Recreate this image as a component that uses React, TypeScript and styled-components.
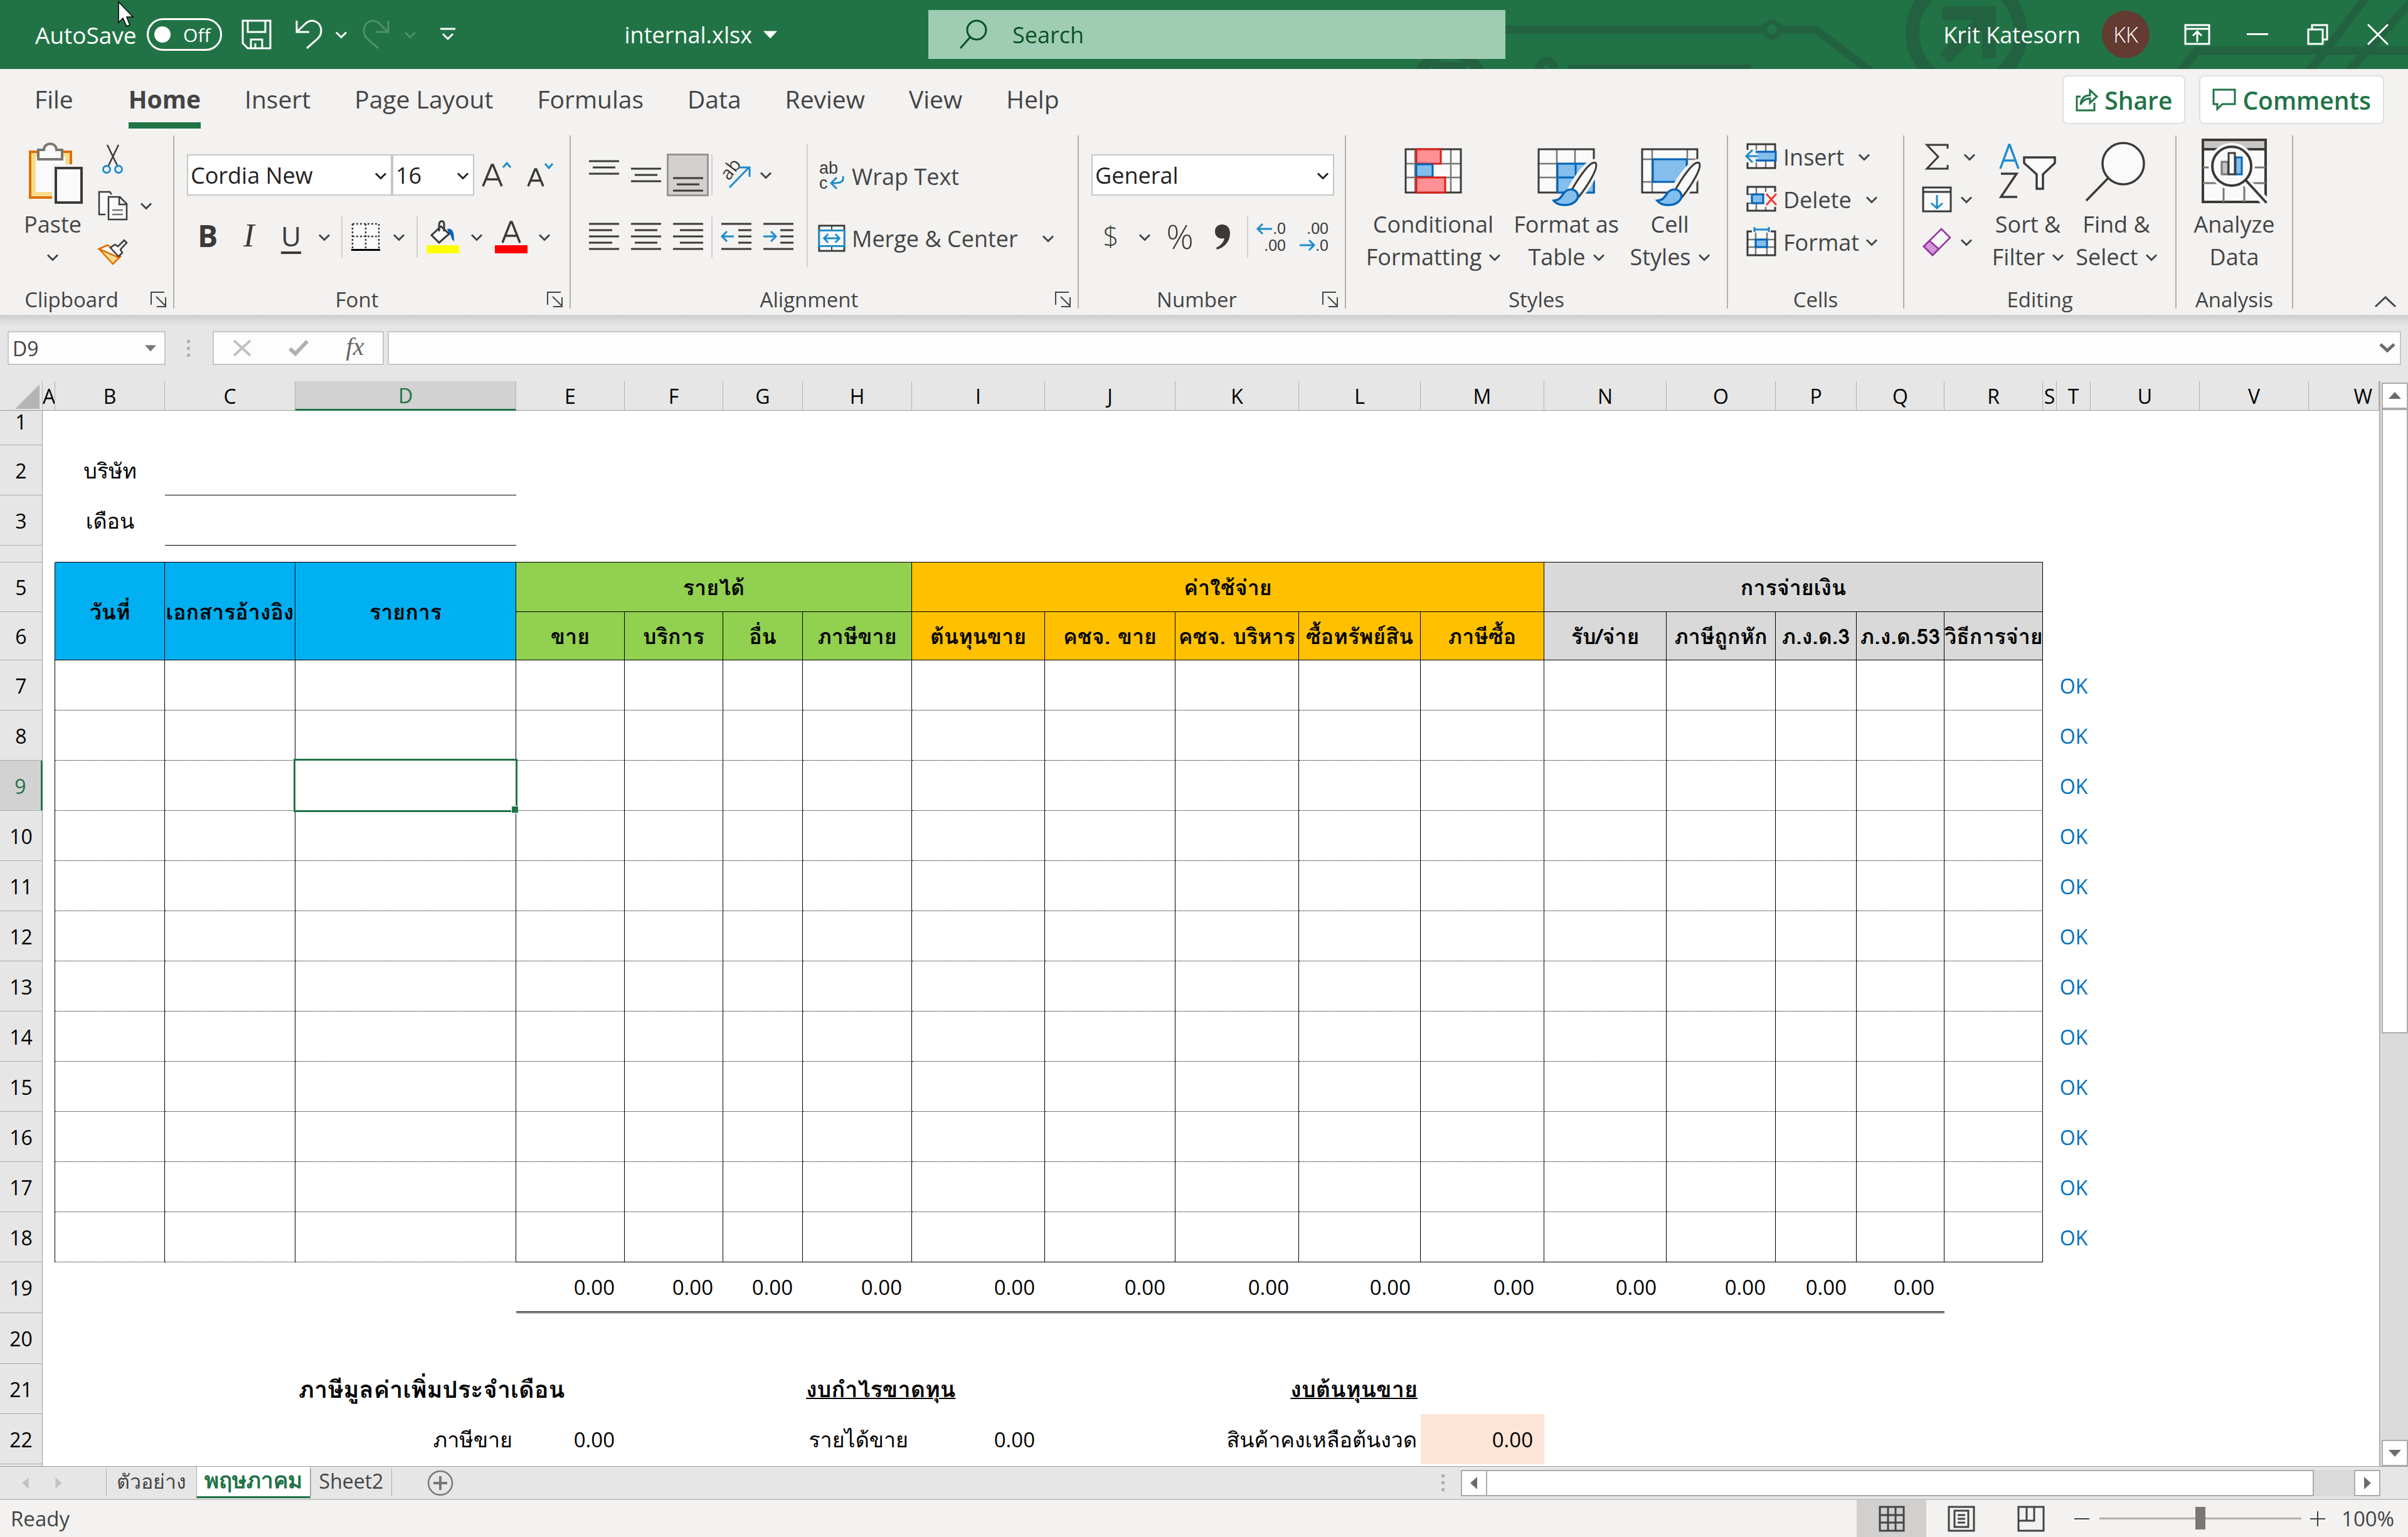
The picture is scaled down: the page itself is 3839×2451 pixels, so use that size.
import React from "react";
import styled, { createGlobalStyle, css } from "styled-components";

const UI_FONT = `"Open Sans", "Noto Sans", sans-serif`;
const THAI_FONT = `"Loma", "Waree", "Garuda", "Noto Sans Thai Looped", "Open Sans", "Noto Sans", sans-serif`;

const GlobalStyle = createGlobalStyle`
  * { box-sizing: border-box; }
  body { margin: 0; background: #e6e6e6; font-family: ${UI_FONT}; color: #444; }
  button, input, select { font: inherit; color: inherit; margin: 0; padding: 0; border: 0; background: none; border-radius: 0; }
  svg { display: block; flex: none; overflow: visible; }
`;

const ink = "#3b3a38";
const blue = "#1e8bcd";
const deepBlue = "#0364b8";
const paleBlue = "#83beec";
const green = "#217346";

const Page = styled.div`
  display: flex;
  flex-direction: column;
  height: 100vh;
  overflow: hidden;
`;

/* ---------- title bar ---------- */

const TitleBar = styled.header`
  position: relative;
  display: grid;
  grid-template-columns: 1480fr 920fr 1439fr;
  align-items: center;
  height: 110px;
  flex: none;
  background: ${green};
  color: #fff;
  font-size: 36px;
`;

const TitleArt = styled.svg`
  position: absolute;
  right: 0;
  top: 0;
  overflow: hidden;
`;

const TitleSide = styled.div<{ $end?: boolean }>`
  position: relative;
  display: flex;
  align-items: center;
  height: 100%;
  justify-content: ${(p) => (p.$end ? "flex-end" : "flex-start")};
  padding-left: ${(p) => (p.$end ? 0 : 56)}px;
`;

const AutoSave = styled.label`
  display: flex;
  align-items: center;
  gap: 16px;
  font-size: 37px;
`;

const Toggle = styled.span`
  position: relative;
  display: flex;
  align-items: center;
  justify-content: flex-end;
  width: 120px;
  height: 52px;
  padding-right: 15px;
  border: 3px solid #fff;
  border-radius: 26px;
  font-size: 30px;

  input {
    appearance: none;
    position: absolute;
    left: 9px;
    top: 10px;
    width: 26px;
    height: 26px;
    border-radius: 50%;
    background: #fff;
  }
`;

const Slot = styled.button<{ $w: number; $h?: number; $on?: boolean }>`
  display: flex;
  align-items: center;
  justify-content: center;
  flex: none;
  width: ${(p) => p.$w}px;
  height: ${(p) => p.$h ?? 68}px;
  ${(p) => p.$on && css`background: #d2d0ce; border: 3px solid #979593;`}
`;

const FileName = styled.button`
  display: flex;
  align-items: center;
  gap: 18px;
  margin-left: auto;
  margin-right: 241px;
`;

const SearchBox = styled.label`
  position: relative;
  display: flex;
  align-items: center;
  gap: 40px;
  height: 78px;
  padding-left: 50px;
  background: #9fcdb3;
  color: #0b5226;

  input {
    flex: 1;
    outline: none;
  }
  input::placeholder { color: #0b5226; opacity: 1; }
`;

const UserName = styled.span`
  margin-right: 34px;
`;

const Avatar = styled.span`
  display: flex;
  align-items: center;
  justify-content: center;
  width: 76px;
  height: 76px;
  margin-right: 28px;
  border-radius: 50%;
  background: #633b31;
  font-size: 34px;
  font-weight: 300;
`;

const MousePointer = styled.svg`
  position: absolute;
  left: 188px;
  top: 2px;
`;

/* ---------- tab strip ---------- */

const TabStrip = styled.nav`
  display: flex;
  align-items: center;
  height: 106px;
  flex: none;
  padding: 0 38px 0 55px;
  background: #f3f2f1;
  font-size: 39px;
`;

const TabList = styled.div`
  display: flex;
  gap: 70px;
  margin-right: auto;
`;

const Tab = styled.button<{ $active?: boolean }>`
  height: 84px;
  border-bottom: 10px solid ${(p) => (p.$active ? green : "transparent")};
  font-weight: ${(p) => (p.$active ? 700 : 400)};
  line-height: 74px;
  margin-left: ${(p) => (p.$active ? 18 : 0)}px;
`;

const PillButton = styled.button`
  display: flex;
  align-items: center;
  gap: 10px;
  height: 78px;
  margin: -8px 0 0 22px;
  padding: 0 19px;
  border: 2px solid #e1dfdd;
  border-radius: 8px;
  background: #fff;
  color: ${green};
  font-size: 39px;
  font-weight: 600;
`;

/* ---------- ribbon ---------- */

const Ribbon = styled.div`
  display: flex;
  height: 286px;
  flex: none;
  padding-bottom: 10px;
  background: #f3f2f1;
  font-size: 36px;
`;

const Group = styled.section<{ $w: number }>`
  display: flex;
  flex-direction: column;
  flex: none;
  width: ${(p) => p.$w}px;
  border-right: 2px solid #b3b0ad;
`;

const GroupBody = styled.div<{ $pad?: number }>`
  display: flex;
  height: 248px;
  padding-left: ${(p) => p.$pad ?? 0}px;
`;

const GroupFoot = styled.div`
  display: flex;
  align-items: center;
  height: 28px;
  font-size: 33px;
  line-height: 28px;

  span { flex: 1; text-align: center; }
`;

const LauncherButton = styled.button`
  width: 28px;
  margin: 0 8px 0 12px;
`;

const Collapse = styled.button`
  display: flex;
  align-items: flex-end;
  margin-left: auto;
  padding: 0 19px 2px 0;
`;

const Big = styled.button<{ $w: number }>`
  display: flex;
  flex-direction: column;
  align-items: center;
  flex: none;
  width: ${(p) => p.$w}px;
  height: 232px;
  line-height: 52px;
  white-space: nowrap;
`;

const BigIcon = styled.svg`
  width: 110px;
  height: 116px;
`;

const Line = styled.span`
  display: flex;
  align-items: center;
  justify-content: center;
  gap: 12px;
  height: 52px;
`;

const Stack = styled.div<{ $pad?: number; $gap?: number }>`
  display: flex;
  flex-direction: column;
  padding-top: ${(p) => p.$pad ?? 0}px;
  gap: ${(p) => p.$gap ?? 0}px;
`;

const ToolRow = styled.div`
  display: flex;
  align-items: center;
  height: 68px;
`;

const Rule = styled.i<{ $gap: number; $h?: number }>`
  width: 2px;
  height: ${(p) => p.$h ?? 66}px;
  margin: 0 ${(p) => p.$gap}px;
  background: #d2d0ce;
`;

const Combo = styled.label<{ $w: number }>`
  position: relative;
  display: block;
  width: ${(p) => p.$w}px;
  height: 66px;

  select {
    appearance: none;
    width: 100%;
    height: 100%;
    padding-left: 4px;
    border: 2px solid #c8c6c4;
    background: #fff;
    color: #222;
    font-size: 36px;
  }
  svg {
    position: absolute;
    right: 9px;
    top: 29px;
  }
`;

const TextTool = styled.button`
  display: flex;
  align-items: center;
  height: 68px;
  padding-left: 4px;
  gap: 10px;
  white-space: nowrap;
`;

const Glyph = styled.span<{ $size?: number; $weight?: number; $italic?: boolean; $under?: boolean; $serif?: boolean; $color?: string }>`
  padding-bottom: 4px;
  font-size: ${(p) => p.$size ?? 46}px;
  line-height: 52px;
  color: ${(p) => p.$color ?? ink};
  font-weight: ${(p) => p.$weight ?? 400};
  font-style: ${(p) => (p.$italic ? "italic" : "normal")};
  font-family: ${(p) => (p.$serif ? `"Liberation Serif", serif` : "inherit")};
  text-decoration: ${(p) => (p.$under ? "underline" : "none")};
  text-underline-offset: 8px;
`;

/* ---------- formula bar ---------- */

const FormulaBar = styled.div`
  display: flex;
  align-items: center;
  height: 106px;
  flex: none;
  padding: 0 11px 0 12px;
  background: linear-gradient(#cfcfcf, #e6e6e6 18px);
  font-size: 32px;
`;

const Field = styled.div<{ $w?: number }>`
  display: flex;
  align-items: center;
  height: 54px;
  width: ${(p) => (p.$w ? `${p.$w}px` : "auto")};
  flex: ${(p) => (p.$w ? "none" : "1")};
  border: 2px solid #c6c6c6;
  background: #fdfdfd;

  input { flex: 1; min-width: 0; padding-left: 6px; outline: none; }
`;

const Dots = styled.span<{ $before: number; $after: number }>`
  display: grid;
  gap: 6px;
  margin-left: ${(p) => (p.$before ? `${p.$before}px` : "auto")};
  margin-right: ${(p) => p.$after}px;

  i { width: 5px; height: 5px; background: #b0b0b0; }
`;

/* ---------- sheet ---------- */

const Workspace = styled.main`
  display: flex;
  flex: 1;
  min-height: 0;
`;

const SheetView = styled.div`
  flex: 1;
  min-width: 0;
  overflow: hidden;
  background: #fff;
  border-right: 2px solid #ababab;
`;

const Sheet = styled.table`
  width: 100%;
  table-layout: fixed;
  border-collapse: separate;
  border-spacing: 0;
  font-size: 32px;
  line-height: 40px;
  color: #000;
`;

const ColHead = styled.th<{ $active?: boolean; $end?: boolean }>`
  height: 47px;
  padding: ${(p) => (p.$end ? "2px 10px 0 0" : "2px 0 0")};
  overflow: hidden;
  text-align: ${(p) => (p.$end ? "right" : "center")};
  font-weight: 400;
  background: ${(p) => (p.$active ? "#d2d2d2" : "#e6e6e6")};
  color: ${(p) => (p.$active ? green : "#000")};
  border-right: 1px solid #b1b1b1;
  border-bottom: ${(p) => (p.$active ? `3px solid ${green}` : "1px solid #9b9b9b")};
`;

const RowHead = styled.th<{ $active?: boolean; $top?: boolean }>`
  padding: ${(p) => (p.$top ? 0 : 2)}px 0 0;
  text-align: center;
  vertical-align: ${(p) => (p.$top ? "top" : "middle")};
  line-height: ${(p) => (p.$top ? 36 : 40)}px;
  font-weight: 400;
  background: ${(p) => (p.$active ? "#d2d2d2" : "#e6e6e6")};
  color: ${(p) => (p.$active ? green : "#000")};
  border-right: ${(p) => (p.$active ? `3px solid ${green}` : "1px solid #9b9b9b")};
  border-bottom: 1px solid #ababab;
`;

const Row = styled.tr<{ $h: number }>`
  height: ${(p) => p.$h}px;
`;

type CellProps = {
  $bg?: string;
  $right?: boolean;
  $bottom?: "solid" | "dotted" | "double";
  $align?: "left" | "center" | "right";
  $pad?: number;
  $color?: string;
  $selected?: boolean;
};

const Cell = styled.td<CellProps>`
  ${(p) => p.$selected && css`position: relative;`}
  padding: 2px ${(p) => p.$pad ?? 0}px 0;
  white-space: nowrap;
  text-align: ${(p) => p.$align ?? "center"};
  color: ${(p) => p.$color ?? "#000"};
  background: ${(p) => p.$bg ?? "#fff"};
  border-right: ${(p) => (p.$right ? "1px solid #000" : "0")};
  border-bottom: ${(p) =>
    p.$bottom === "double" ? "3px double #000" : p.$bottom ? `1px ${p.$bottom} #000` : "0"};
`;

const Thai = styled.span<{ $kind?: "head" | "title" | "under" }>`
  font-family: ${THAI_FONT};
  font-size: ${(p) => (p.$kind === "title" ? 38 : p.$kind === "under" ? 36 : 34)}px;
  font-weight: ${(p) => (p.$kind ? 600 : 300)};
  line-height: 40px;
  text-decoration: ${(p) => (p.$kind === "under" ? "underline" : "none")};
  text-decoration-thickness: 2px;
`;

const Figure = styled.span`
  font-size: 33px;
`;

const Selection = styled.i`
  position: absolute;
  inset: -3px;
  border: 3px solid ${green};

  &::after {
    content: "";
    position: absolute;
    right: -5px;
    bottom: -5px;
    width: 10px;
    height: 10px;
    background: ${green};
    border: 1px solid #fff;
  }
`;

/* ---------- scroll bars ---------- */

const VScroll = styled.div`
  display: flex;
  flex-direction: column;
  width: 42px;
  margin: 2px 0 0 2px;
  background: #dadada;
`;

const VThumb = styled.div`
  flex: 996;
  border: 2px solid #ababab;
  background: #fff;
`;

const VTrack = styled.div`
  flex: 651;
`;

const Arrow = styled.button`
  display: flex;
  align-items: center;
  justify-content: center;
  flex: none;
  width: 42px;
  height: 42px;
  border: 2px solid #ababab;
  background: #fff;
`;

/* ---------- bottom bars ---------- */

const SheetBar = styled.div`
  display: flex;
  align-items: center;
  height: 54px;
  flex: none;
  padding-right: 44px;
  border-top: 1px solid #9b9b9b;
  border-bottom: 2px solid #c6c6c6;
  background: #e6e6e6;
  font-size: 32px;
`;

const SheetNav = styled.div`
  display: flex;
  gap: 34px;
  width: 169px;
  padding-left: 32px;
`;

const SheetTab = styled.button<{ $active?: boolean; $w: number }>`
  width: ${(p) => p.$w}px;
  height: ${(p) => (p.$active ? 50 : 44)}px;
  margin-top: -2px;
  padding-bottom: 4px;
  line-height: 36px;
  font-size: ${(p) => (p.$active ? 35 : 32)}px;
  white-space: nowrap;
  border-left: 1px solid #ababab;
  border-right: 1px solid #ababab;
  ${(p) =>
    p.$active
      ? css`background: #fff; color: ${green}; font-weight: 700; border-bottom: 3px solid ${green};`
      : css`margin-right: -1px;`}
`;

const AddSheet = styled.button`
  margin-left: 57px;
`;

const HScroll = styled.div`
  display: flex;
  width: 1466px;
  background: #dadada;
`;

const HThumb = styled.div`
  flex: 1320;
  height: 42px;
  margin-left: -2px;
  border: 2px solid #ababab;
  background: #fff;
`;

const HTrack = styled.div`
  flex: 64;
`;

const StatusBar = styled.footer`
  display: flex;
  align-items: center;
  height: 59px;
  flex: none;
  padding: 0 22px 0 17px;
  background: #f3f2f1;
  font-size: 33px;
`;

const ReadyText = styled.span`
  margin-right: auto;
`;

const Views = styled.div`
  display: flex;
  margin-right: 12px;
`;

const ViewButton = styled.button<{ $active?: boolean }>`
  display: flex;
  align-items: center;
  justify-content: center;
  width: 111px;
  height: 59px;
  background: ${(p) => (p.$active ? "#d2d0ce" : "none")};
`;

const Zoom = styled.input`
  appearance: none;
  width: 322px;
  height: 40px;
  margin: 0 14px;

  &::-webkit-slider-runnable-track {
    height: 3px;
    background: #b3b0ad;
  }
  &::-webkit-slider-thumb {
    appearance: none;
    width: 16px;
    height: 36px;
    margin-top: -17px;
    background: #7a7875;
  }
`;

const ZoomValue = styled.output`
  width: 88px;
  margin-left: 22px;
  text-align: right;
`;

/* ---------- icons ---------- */

const Chevron = ({ color = "#444" }: { color?: string }) => (
  <svg width="18" height="11" viewBox="0 0 18 11" fill="none" stroke={color} strokeWidth="3">
    <path d="M1 1.5 9 9.5 17 1.5" />
  </svg>
);

const Triangle = ({ d, color = "#6b6b6b", size = 20 }: { d: "up" | "down" | "left" | "right"; color?: string; size?: number }) => {
  const shapes = {
    up: "M0 15 10 4 20 15Z",
    down: "M0 5 10 16 20 5Z",
    left: "M15 0 4 10 15 20Z",
    right: "M5 0 16 10 5 20Z",
  };
  return (
    <svg width={size} height={size} viewBox="0 0 20 20" fill={color}>
      <path d={shapes[d]} />
    </svg>
  );
};

const Launcher = () => (
  <svg width="26" height="26" viewBox="0 0 26 26" fill="none" stroke="#444" strokeWidth="2">
    <path d="M1 21V1H22M9 8 23 22M24 9V24H10" />
  </svg>
);

const Lines = ({ rows, top = 0, h = 48 }: { rows: [number, number][]; top?: number; h?: number }) => (
  <svg width="48" height={h} viewBox={`0 0 48 ${h}`} stroke={ink} strokeWidth="3">
    {rows.map(([a, b], i) => (
      <path key={i} d={`M${a} ${top + i * 10}H${b}`} />
    ))}
  </svg>
);

const Art = () => (
  <TitleArt width="1600" height="110" viewBox="2239 0 1600 110" fill="none" stroke="#226240" strokeWidth="13">
    <path d="M2400 47H2810M2840 47H2895L2985 116M2500 109H2792" />
    <circle cx="2825" cy="47" r="12" strokeWidth="8" />
    <circle cx="3135" cy="52" r="86" strokeWidth="22" />
    <path d="M3097 10H3182V93H3160V48L3108 101 3092 86 3146 32H3097Z" fill="#226240" stroke="none" />
    <path d="M3476 116 3502 81H3839M3772 -4 3680 116M3850 -4 3742 116" />
    <circle cx="2312" cy="134" r="50" strokeWidth="18" />
    <path d="M2283 99H2338V112H2283Z" fill="#226240" stroke="none" />
    <path d="M2453 114C2453 92 2475 92 2478 108" />
  </TitleArt>
);

const TableBase = ({ x, y, w, h, cols, rows }: { x: number; y: number; w: number; h: number; cols: number[]; rows: number[] }) => (
  <g fill="none">
    <rect x={x} y={y} width={w} height={h} fill="#fafafa" />
    <path d={cols.map((c) => `M${c} ${y}V${y + h}`).join("") + rows.map((r) => `M${x} ${r}H${x + w}`).join("")} stroke="#797774" strokeWidth="2.500" />
    <rect x={x} y={y} width={w} height={h} stroke={ink} strokeWidth="3" />
  </g>
);

const Brush = ({ x, y }: { x: number; y: number }) => (
  <g transform={`translate(${x} ${y})`}>
    <path d="M17 46C30 18 52-8 60-2 65 6 46 34 32 52Z" fill="#fafafa" stroke="#f3f2f1" strokeWidth="11" />
    <path d="M18 46C32 20 52-8 59-2 64 6 46 34 32 52Z" fill="#fafafa" stroke={ink} strokeWidth="3" />
    <path d="M-8 58C4 57 5 49 9 45 14 39 24 38 29 45 35 55 24 65 10 65 2 65-5 62-8 58Z" fill={paleBlue} stroke={deepBlue} strokeWidth="3.500" />
  </g>
);

const PasteIcon = () => (
  <BigIcon viewBox="0 0 110 116" fill="none">
    <rect x="19" y="26" width="65" height="73" fill="#f9dc8e" stroke="#e07000" strokeWidth="4" />
    <rect x="28" y="34" width="47" height="56" fill="#fafafa" />
    <path d="M32 29V38H70V23H61C61 10 41 10 41 23H32Z" fill="#fafafa" stroke="#797774" strokeWidth="4" />
    <rect x="54" y="46" width="52" height="68" fill="#f3f2f1" />
    <rect x="60" y="52" width="41" height="55" fill="#fafafa" stroke={ink} strokeWidth="4" />
  </BigIcon>
);

const CutIcon = () => (
  <svg width="34" height="48" viewBox="0 0 34 48" fill="none" strokeWidth="3">
    <path d="M8 1 24 34M26 1 10 34" stroke={ink} strokeWidth="2.500" />
    <circle cx="7" cy="40" r="5.500" stroke={blue} />
    <circle cx="26" cy="40" r="5.500" stroke={blue} />
  </svg>
);

const CopyIcon = () => (
  <svg width="48" height="48" viewBox="0 0 48 48" fill="#fafafa" stroke={ink} strokeWidth="2.500">
    <path d="M12 38H2V2H19L22 6" />
    <path d="M17 10H35L46 21V46H17ZM34 10V22H46" />
    <path d="M23 31H40M23 38H40" stroke="#797774" />
  </svg>
);

const PainterIcon = () => (
  <svg width="48" height="42" viewBox="0 0 48 42" fill="none" strokeWidth="2.500">
    <path d="M2 16 15 10 36 28 24 40Z" fill="#f9dc8e" stroke="#e07000" />
    <path d="M2 16 34 30 36 28 22 14 15 10Z" fill="#fafafa" stroke="#e07000" />
    <path d="M20 14 27 9 32 12 42 2 46 6 36 17 39 22 33 28Z" fill="#fafafa" stroke={ink} />
  </svg>
);

const BordersIcon = () => (
  <svg width="46" height="46" viewBox="0 0 46 46" fill="none" stroke={ink} strokeWidth="2.500">
    <rect x="1" y="1" width="44" height="42" fill="#fafafa" stroke="none" />
    <path d="M2 2H44M2 22H44M2 2V42M23 2V42M44 2V42" strokeDasharray="3 3" />
    <path d="M0 43.500H46" stroke="#000" strokeWidth="3" />
  </svg>
);

const FillIcon = () => (
  <svg width="52" height="54" viewBox="0 0 52 54" fill="none">
    <path d="M8 24 23 10 36 22 20 36Z" fill="#fafafa" stroke={ink} strokeWidth="3" />
    <path d="M20 18V8C20 0 28 0 28 6V18" stroke={ink} strokeWidth="3" />
    <path d="M33 14C42 12 44 20 44 34 38 30 40 22 35 20Z" fill={deepBlue} />
    <path d="M0 40H52V53H0Z" fill="#ff0" />
  </svg>
);

const FontColorIcon = () => (
  <svg width="52" height="54" viewBox="0 0 52 54" fill="none">
    <path d="M12 36 25 3H27L40 36M17 25H35" stroke={ink} strokeWidth="3.500" />
    <path d="M0 40H52V53H0Z" fill="#f00" />
  </svg>
);

const GrowIcon = ({ up }: { up?: boolean }) => (
  <svg width="48" height="52" viewBox="0 0 48 52" fill="none" strokeWidth="3">
    <path d={up ? "M2 44 16 10H18L32 44M7 33H27" : "M2 44 13 17H15L26 44M6 35H22"} stroke={ink} strokeWidth="3.500" />
    <path d={up ? "M34 14 40 7 46 14" : "M29 8 35 15 41 8"} stroke={blue} />
  </svg>
);

const OrientIcon = () => (
  <svg width="50" height="52" viewBox="0 0 50 52" fill="none">
    <text x="0" y="0" transform="translate(14 36) rotate(-52)" fontSize="29" fill={ink}>ab</text>
    <path d="M15 46 46 14M30 14H47V29" stroke={blue} strokeWidth="3" />
  </svg>
);

const IndentIcon = ({ out }: { out?: boolean }) => (
  <svg width="48" height="48" viewBox="0 0 48 48" fill="none" strokeWidth="3">
    <path d="M0 3H48M27 13H48M27 23H48M27 33H48M0 43H48" stroke={ink} />
    <path d={out ? "M20 23H2M9 15 1 23 9 31" : "M0 23H19M12 15 20 23 12 31"} stroke={blue} />
  </svg>
);

const SmallText = styled.text`
  font-family: "Liberation Sans", sans-serif;
  fill: ${ink};
`;

const WrapIcon = () => (
  <svg width="44" height="54" viewBox="0 0 44 54" fill="none">
    <SmallText x="2" y="23" fontSize="27">ab</SmallText>
    <SmallText x="2" y="47" fontSize="27">c</SmallText>
    <path d="M40 27C42 38 34 38 21 38M30 29 21 38 30 47" stroke={blue} strokeWidth="3" />
  </svg>
);

const MergeIcon = () => (
  <svg width="44" height="46" viewBox="0 0 46 46" fill="none">
    <rect x="2" y="2" width="42" height="42" fill="#fafafa" stroke={ink} strokeWidth="3" />
    <path d="M23 2V10M23 36V44" stroke={ink} strokeWidth="2" />
    <rect x="2" y="10" width="42" height="26" fill="#fafafa" stroke={blue} strokeWidth="3" />
    <path d="M10 23H36M17 16 10 23 17 30M29 16 36 23 29 30" stroke={blue} strokeWidth="3" />
  </svg>
);

const DecimalIcon = ({ more }: { more?: boolean }) => (
  <svg width="46" height="56" viewBox="0 0 46 56" fill="none">
    <SmallText x="46" y="23" textAnchor="end" fontSize="25">{more ? ".0" : ".00"}</SmallText>
    <SmallText x="46" y="50" textAnchor="end" fontSize="25">{more ? ".00" : ".0"}</SmallText>
    <path d={more ? "M24 15H2M9 7 1 15 9 23" : "M0 41H22M15 33 23 41 15 49"} stroke={blue} strokeWidth="3" />
  </svg>
);

const CommaIcon = () => (
  <svg width="26" height="42" viewBox="0 0 26 42" fill={ink}>
    <path d="M12 1C20 1 25 6 25 15 25 28 16 38 4 41L3 38C10 35 15 29 16 23 7 25 1 20 1 12 1 5 6 1 12 1Z" />
  </svg>
);

const ConditionalIcon = () => (
  <BigIcon viewBox="0 0 110 116" fill="none" strokeWidth="3">
    <TableBase x={11} y={22} w={88} h={69} cols={[26, 83]} rows={[45, 67]} />
    <rect x="28" y="22" width="39" height="23" fill="#ff9096" stroke="#d92118" />
    <rect x="28" y="46" width="26" height="20" fill={paleBlue} stroke={deepBlue} />
    <rect x="28" y="67" width="46" height="24" fill="#ff9096" stroke="#d92118" />
  </BigIcon>
);

const FormatTableIcon = () => (
  <BigIcon viewBox="0 0 110 116" fill="none" strokeWidth="3">
    <TableBase x={11} y={22} w={88} h={69} cols={[40, 69]} rows={[45, 67]} />
    <rect x="41" y="45" width="58" height="46" fill={paleBlue} stroke={deepBlue} />
    <path d="M41 67H99M70 45V91" stroke={deepBlue} />
    <Brush x={43} y={46} />
  </BigIcon>
);

const CellStylesIcon = () => (
  <BigIcon viewBox="0 0 110 116" fill="none" strokeWidth="3">
    <TableBase x={11} y={22} w={88} h={69} cols={[27, 83]} rows={[38, 74]} />
    <rect x="28" y="38" width="54" height="36" fill={paleBlue} stroke={deepBlue} />
    <Brush x={43} y={46} />
  </BigIcon>
);

const InsertIcon = () => (
  <svg width="50" height="44" viewBox="0 0 50 44" fill="none" strokeWidth="3">
    <TableBase x={3} y={2} w={44} h={38} cols={[17, 32]} rows={[14, 28]} />
    <path d="M0 11H24V31H0Z" fill="#f3f2f1" />
    <path d="M16 14H48V28H16" fill={paleBlue} stroke={deepBlue} />
    <path d="M20 21H2M11 11 1 21 11 31" stroke="#f3f2f1" strokeWidth="8" />
    <path d="M20 21H2M11 11 1 21 11 31" stroke={blue} />
  </svg>
);

const DeleteIcon = () => (
  <svg width="50" height="44" viewBox="0 0 50 44" fill="none" strokeWidth="3">
    <TableBase x={3} y={2} w={44} h={38} cols={[17, 32]} rows={[14, 28]} />
    <path d="M0 15H10V27H0Z" fill="#f3f2f1" />
    <path d="M10 14H28V28H10Z" fill={paleBlue} stroke={deepBlue} />
    <path d="M30 10H50V34H30Z" fill="#f3f2f1" />
    <path d="M33 13 49 31M49 13 33 31" stroke="#ee3b3b" />
  </svg>
);

const FormatIcon = () => (
  <svg width="50" height="48" viewBox="0 0 50 48" fill="none" strokeWidth="3">
    <TableBase x={3} y={7} w={44} h={38} cols={[16, 34]} rows={[20, 32]} />
    <rect x="16" y="20" width="18" height="12" fill={paleBlue} stroke={deepBlue} />
    <path d="M10 0H40V9H10Z" fill="#f3f2f1" />
    <path d="M14 0V8M37 0V8M14 4H37" stroke={blue} />
  </svg>
);

const SigmaIcon = () => (
  <svg width="38" height="42" viewBox="0 0 38 42" fill="none" stroke={ink} strokeWidth="3">
    <path d="M36 8V2H3L21 21 3 40H36V34" />
  </svg>
);

const FillDownIcon = () => (
  <svg width="48" height="42" viewBox="0 0 48 42" fill="none" strokeWidth="3">
    <path d="M2 2H46V40H2ZM2 9H46" fill="#fafafa" stroke={ink} />
    <path d="M24 14V34M15 27 24 35 33 27" stroke={blue} />
  </svg>
);

const EraserIcon = () => (
  <svg width="48" height="46" viewBox="0 0 48 46" strokeWidth="2.500" stroke="#9332a0">
    <path d="M31 2 45 16 17 44 3 30Z" fill="#fafafa" />
    <path d="M12 21 27 34 17 44 3 30Z" fill="#d494dc" />
  </svg>
);

const SortIcon = () => (
  <BigIcon viewBox="0 0 110 116" fill="none" strokeWidth="3.500">
    <path d="M11 53 25 15H26L40 53M16 40H35" stroke={blue} />
    <path d="M12 61H37L12 98H38" stroke={ink} />
    <path d="M49 35H98V44L79 62V85H69V62L49 44Z" fill="#fafafa" stroke={ink} />
  </BigIcon>
);

const FindIcon = () => (
  <BigIcon viewBox="0 0 110 116" fill="none" stroke={ink} strokeWidth="3.500">
    <circle cx="66" cy="45" r="33" fill="#fafafa" />
    <path d="M42 68 7 104" />
  </BigIcon>
);

const AnalyzeIcon = () => (
  <BigIcon viewBox="0 0 110 116" fill="none" strokeWidth="4">
    <rect x="5" y="7" width="100" height="99" fill="#fafafa" stroke={ink} />
    <path d="M7 9H103V20H7Z" fill="#c8c6c4" />
    <path d="M5 22H105" stroke={ink} />
    <path d="M5 51H105M5 76H105M38 76V106M71 76V106" stroke="#797774" strokeWidth="3" />
    <circle cx="51" cy="49" r="37" fill="#fafafa" />
    <path d="M70 70 105 106" stroke="#fafafa" strokeWidth="14" />
    <circle cx="51" cy="49" r="31" stroke={ink} />
    <path d="M73 71 105 106" stroke={ink} />
    <path d="M35 42H45V62H35Z" fill="#c8c6c4" stroke="#797774" strokeWidth="3" />
    <path d="M57 35H67V62H57Z" fill={paleBlue} stroke={deepBlue} strokeWidth="3" />
    <path d="M46 28H56V62H46Z" fill="#fafafa" stroke={ink} strokeWidth="3" />
  </BigIcon>
);

const SaveIcon = () => (
  <svg width="48" height="48" viewBox="0 0 48 48" fill="none" stroke="#fff" strokeWidth="3">
    <path d="M2 2H46V46H10L2 38ZM10 2V20H38V2M15 46V32H33V46M22 46V38" />
  </svg>
);

const UndoIcon = ({ flip, color = "#fff" }: { flip?: boolean; color?: string }) => (
  <svg width="44" height="48" viewBox="0 0 44 48" fill="none" stroke={color} strokeWidth="3">
    <g transform={flip ? "translate(44 0) scale(-1 1)" : undefined}>
      <path d="M2 2V20H22M3 19 18 5C28-2 41 5 41 18 41 25 38 28 34 32L18 46" />
    </g>
  </svg>
);

/* ---------- sheet data ---------- */

const columns: [string, number][] = [
  ["A", 20], ["B", 175], ["C", 208], ["D", 352], ["E", 173], ["F", 157], ["G", 127], ["H", 174],
  ["I", 212], ["J", 208], ["K", 197], ["L", 194], ["M", 197], ["N", 195], ["O", 174], ["P", 129],
  ["Q", 140], ["R", 157], ["S", 22], ["T", 54], ["U", 174], ["V", 174], ["W", 0],
];

const letters = (from: string, to: string) =>
  columns.map(([c]) => c).filter((c) => c >= from && c <= to);

const sky = "#00b0f0";
const lime = "#92d050";
const amber = "#ffc000";
const silver = "#d9d9d9";

const subHeads: [string, string][] = [
  ["ขาย", lime], ["บริการ", lime], ["อื่น", lime], ["ภาษีขาย", lime],
  ["ต้นทุนขาย", amber], ["คชจ. ขาย", amber], ["คชจ. บริหาร", amber], ["ซื้อทรัพย์สิน", amber], ["ภาษีซื้อ", amber],
  ["รับ/จ่าย", silver], ["ภาษีถูกหัก", silver], ["ภ.ง.ด.3", silver], ["ภ.ง.ด.53", silver], ["วิธีการจ่าย", silver],
];

const entryRows = Array.from({ length: 12 }, (_, i) => i + 7);

const shortLines: [number, number][] = [[0, 48], [6, 42], [0, 48]];
const leftLines: [number, number][] = [[0, 48], [0, 37], [0, 48], [0, 37], [0, 48]];
const centerLines: [number, number][] = [[0, 48], [6, 42], [0, 48], [6, 42], [0, 48]];
const rightLines: [number, number][] = [[0, 48], [11, 48], [0, 48], [11, 48], [0, 48]];

export default function App() {
  return (
    <Page>
      <GlobalStyle />

      <TitleBar>
        <Art />
        <TitleSide>
          <AutoSave>
            AutoSave
            <Toggle>
              <input type="checkbox" aria-label="AutoSave" />
              Off
            </Toggle>
          </AutoSave>
          <Slot $w={110} aria-label="Save"><SaveIcon /></Slot>
          <Slot $w={58} aria-label="Undo"><UndoIcon /></Slot>
          <Slot $w={44} aria-label="Undo history"><Chevron color="#fff" /></Slot>
          <Slot $w={66} aria-label="Redo"><UndoIcon flip color="#4d9068" /></Slot>
          <Slot $w={44} aria-label="Redo history"><Chevron color="#4d9068" /></Slot>
          <Slot $w={76} aria-label="Customize toolbar">
            <svg width="26" height="24" viewBox="0 0 26 24" fill="none" stroke="#fff" strokeWidth="3">
              <path d="M1 3H25M5 11 13 19 21 11" />
            </svg>
          </Slot>
          <FileName>
            internal.xlsx
            <Triangle d="down" color="#fff" size={22} />
          </FileName>
        </TitleSide>
        <SearchBox>
          <svg width="44" height="48" viewBox="0 0 44 48" fill="none" stroke="#0b5226" strokeWidth="3">
            <circle cx="27" cy="17" r="15" />
            <path d="M17 28 1 46" />
          </svg>
          <input type="search" placeholder="Search" aria-label="Search" />
        </SearchBox>
        <TitleSide $end>
          <UserName>Krit Katesorn</UserName>
          <Avatar>KK</Avatar>
          <Slot $w={96} aria-label="Ribbon display options">
            <svg width="42" height="34" viewBox="0 0 42 34" fill="none" stroke="#fff" strokeWidth="3">
              <path d="M2 2H40V32H2ZM2 8H40M21 29V13M14 19 21 12 28 19" />
            </svg>
          </Slot>
          <Slot $w={96} aria-label="Minimize">
            <svg width="34" height="4" viewBox="0 0 34 4"><path d="M0 0H34V3H0Z" fill="#fff" /></svg>
          </Slot>
          <Slot $w={96} aria-label="Restore">
            <svg width="34" height="34" viewBox="0 0 34 34" fill="none" stroke="#fff" strokeWidth="3">
              <path d="M2 9H25V32H2ZM8 9V2H32V25H25" />
            </svg>
          </Slot>
          <Slot $w={96} aria-label="Close">
            <svg width="34" height="34" viewBox="0 0 34 34" stroke="#fff" strokeWidth="3">
              <path d="M1 1 33 33M33 1 1 33" />
            </svg>
          </Slot>
        </TitleSide>
        <MousePointer width="26" height="42" viewBox="0 0 26 42">
          <path d="M1 1V34L8 27 14 40 19 38 14 25H24Z" fill="#fff" stroke="#000" strokeWidth="1.500" />
        </MousePointer>
      </TitleBar>

      <TabStrip>
        <TabList>
          {["File", "Home", "Insert", "Page Layout", "Formulas", "Data", "Review", "View", "Help"].map((t) => (
            <Tab key={t} $active={t === "Home"}>{t}</Tab>
          ))}
        </TabList>
        <PillButton>
          <svg width="36" height="38" viewBox="0 0 36 38" fill="none" stroke={green} strokeWidth="3">
            <path d="M8 14H2V36H30V24" />
            <path d="M8 27C9 16 15 12 23 12V4L34 14 23 24V17C16 17 11 20 8 27Z" />
          </svg>
          Share
        </PillButton>
        <PillButton>
          <svg width="38" height="36" viewBox="0 0 38 36" fill="none" stroke={green} strokeWidth="3">
            <path d="M2 2H36V25H16L8 33V25H2Z" />
          </svg>
          Comments
        </PillButton>
      </TabStrip>

      <Ribbon>
        <Group $w={278}>
          <GroupBody $pad={19}>
            <Big $w={130}>
              <PasteIcon />
              <Line>Paste</Line>
              <Line><Chevron /></Line>
            </Big>
            <Stack $pad={4} $gap={6}>
              <ToolRow><Slot $w={62} aria-label="Cut"><CutIcon /></Slot></ToolRow>
              <ToolRow>
                <Slot $w={62} aria-label="Copy"><CopyIcon /></Slot>
                <Slot $w={44} aria-label="Copy options"><Chevron /></Slot>
              </ToolRow>
              <ToolRow><Slot $w={62} aria-label="Format Painter"><PainterIcon /></Slot></ToolRow>
            </Stack>
          </GroupBody>
          <GroupFoot><span>Clipboard</span><LauncherButton aria-label="Clipboard settings"><Launcher /></LauncherButton></GroupFoot>
        </Group>

        <Group $w={632}>
          <GroupBody $pad={20}>
            <Stack $pad={29} $gap={31}>
              <ToolRow>
                <Combo $w={327}>
                  <select aria-label="Font"><option>Cordia New</option></select>
                  <Chevron color="#222" />
                </Combo>
                <Combo $w={131}>
                  <select aria-label="Font size"><option>16</option></select>
                  <Chevron color="#222" />
                </Combo>
                <Slot $w={72} aria-label="Increase font size"><GrowIcon up /></Slot>
                <Slot $w={72} aria-label="Decrease font size"><GrowIcon /></Slot>
              </ToolRow>
              <ToolRow>
                <Slot $w={66}><Glyph $weight={700} $size={48}>B</Glyph></Slot>
                <Slot $w={66}><Glyph $italic $serif $size={52}>I</Glyph></Slot>
                <Slot $w={68}><Glyph $under $size={44}>U</Glyph></Slot>
                <Slot $w={38} aria-label="Underline options"><Chevron /></Slot>
                <Rule $gap={8} />
                <Slot $w={58} aria-label="Borders"><BordersIcon /></Slot>
                <Slot $w={48} aria-label="Border options"><Chevron /></Slot>
                <Rule $gap={4} />
                <Slot $w={72} aria-label="Fill color"><FillIcon /></Slot>
                <Slot $w={36} aria-label="Fill options"><Chevron /></Slot>
                <Slot $w={74} aria-label="Font color"><FontColorIcon /></Slot>
                <Slot $w={32} aria-label="Font color options"><Chevron /></Slot>
              </ToolRow>
            </Stack>
          </GroupBody>
          <GroupFoot><span>Font</span><LauncherButton aria-label="Font settings"><Launcher /></LauncherButton></GroupFoot>
        </Group>

        <Group $w={810}>
          <GroupBody $pad={19}>
            <Stack $pad={29} $gap={31}>
              <ToolRow>
                <Slot $w={67} aria-label="Top align"><Lines rows={shortLines} top={6} h={56} /></Slot>
                <Slot $w={67} aria-label="Middle align"><Lines rows={shortLines} top={18} h={56} /></Slot>
                <Slot $w={67} $on aria-label="Bottom align"><Lines rows={shortLines} top={33} h={56} /></Slot>
                <Rule $gap={4} />
                <Slot $w={66} aria-label="Orientation"><OrientIcon /></Slot>
                <Slot $w={30} aria-label="Orientation options"><Chevron /></Slot>
              </ToolRow>
              <ToolRow>
                <Slot $w={67} aria-label="Align left"><Lines rows={leftLines} top={3} /></Slot>
                <Slot $w={67} aria-label="Center"><Lines rows={centerLines} top={3} /></Slot>
                <Slot $w={67} aria-label="Align right"><Lines rows={rightLines} top={3} /></Slot>
                <Rule $gap={4} />
                <Slot $w={67} aria-label="Decrease indent"><IndentIcon out /></Slot>
                <Slot $w={67} aria-label="Increase indent"><IndentIcon /></Slot>
              </ToolRow>
            </Stack>
            <Stack $pad={14}><Rule $gap={12} $h={196} /></Stack>
            <Stack $pad={31} $gap={31}>
              <TextTool><WrapIcon />Wrap Text</TextTool>
              <TextTool><MergeIcon />Merge &amp; Center<Slot as="span" $w={76}><Chevron /></Slot></TextTool>
            </Stack>
          </GroupBody>
          <GroupFoot><span>Alignment</span><LauncherButton aria-label="Alignment settings"><Launcher /></LauncherButton></GroupFoot>
        </Group>

        <Group $w={426}>
          <GroupBody $pad={20}>
            <Stack $pad={29} $gap={31}>
              <ToolRow>
                <Combo $w={387}>
                  <select aria-label="Number format"><option>General</option></select>
                  <Chevron color="#222" />
                </Combo>
              </ToolRow>
              <ToolRow>
                <Slot $w={62}><Glyph $size={44} $weight={300}>$</Glyph></Slot>
                <Slot $w={46} aria-label="Currency options"><Chevron /></Slot>
                <Slot $w={66}><Glyph $size={54} $weight={300}>%</Glyph></Slot>
                <Slot $w={70} aria-label="Comma style"><CommaIcon /></Slot>
                <Rule $gap={4} />
                <Slot $w={66} aria-label="Increase decimal"><DecimalIcon more /></Slot>
                <Slot $w={70} aria-label="Decrease decimal"><DecimalIcon /></Slot>
              </ToolRow>
            </Stack>
          </GroupBody>
          <GroupFoot><span>Number</span><LauncherButton aria-label="Number settings"><Launcher /></LauncherButton></GroupFoot>
        </Group>

        <Group $w={609}>
          <GroupBody $pad={19}>
            <Big $w={240}><ConditionalIcon /><Line>Conditional</Line><Line>Formatting<Chevron /></Line></Big>
            <Big $w={184}><FormatTableIcon /><Line>Format as</Line><Line>Table<Chevron /></Line></Big>
            <Big $w={146}><CellStylesIcon /><Line>Cell</Line><Line>Styles<Chevron /></Line></Big>
          </GroupBody>
          <GroupFoot><span>Styles</span></GroupFoot>
        </Group>

        <Group $w={281}>
          <GroupBody $pad={24}>
            <Stack>
              <TextTool><InsertIcon />Insert<Slot as="span" $w={44}><Chevron /></Slot></TextTool>
              <TextTool><DeleteIcon />Delete<Slot as="span" $w={44}><Chevron /></Slot></TextTool>
              <TextTool><FormatIcon />Format<Slot as="span" $w={20}><Chevron /></Slot></TextTool>
            </Stack>
          </GroupBody>
          <GroupFoot><span>Cells</span></GroupFoot>
        </Group>

        <Group $w={434}>
          <GroupBody $pad={22}>
            <Stack>
              <ToolRow><Slot $w={60} aria-label="AutoSum"><SigmaIcon /></Slot><Slot $w={44} aria-label="AutoSum options"><Chevron /></Slot></ToolRow>
              <ToolRow><Slot $w={60} aria-label="Fill"><FillDownIcon /></Slot><Slot $w={34} aria-label="Fill options"><Chevron /></Slot></ToolRow>
              <ToolRow><Slot $w={60} aria-label="Clear"><EraserIcon /></Slot><Slot $w={34} aria-label="Clear options"><Chevron /></Slot></ToolRow>
            </Stack>
            <Big $w={142}><SortIcon /><Line>Sort &amp;</Line><Line>Filter<Chevron /></Line></Big>
            <Big $w={140}><FindIcon /><Line>Find &amp;</Line><Line>Select<Chevron /></Line></Big>
          </GroupBody>
          <GroupFoot><span>Editing</span></GroupFoot>
        </Group>

        <Group $w={186}>
          <GroupBody>
            <Big $w={184}><AnalyzeIcon /><Line>Analyze</Line><Line>Data</Line></Big>
          </GroupBody>
          <GroupFoot><span>Analysis</span></GroupFoot>
        </Group>

        <Collapse aria-label="Collapse ribbon">
          <svg width="34" height="18" viewBox="0 0 34 18" fill="none" stroke="#444" strokeWidth="3">
            <path d="M1 17 17 2 33 17" />
          </svg>
        </Collapse>
      </Ribbon>

      <FormulaBar>
        <Field $w={252}>
          <input aria-label="Name box" defaultValue="D9" />
          <Slot $w={44} $h={50} aria-label="Names"><Triangle d="down" color="#777" size={18} /></Slot>
        </Field>
        <Dots $before={34} $after={36}><i /><i /><i /></Dots>
        <Field $w={273}>
          <Slot $w={90} $h={50} aria-label="Cancel">
            <svg width="30" height="28" viewBox="0 0 30 28" stroke="#c2c2c2" strokeWidth="4"><path d="M2 2 28 26M28 2 2 26" /></svg>
          </Slot>
          <Slot $w={90} $h={50} aria-label="Enter">
            <svg width="32" height="26" viewBox="0 0 32 26" fill="none" stroke="#b0b0b0" strokeWidth="6"><path d="M2 14 11 22 30 2" /></svg>
          </Slot>
          <Slot $w={90} $h={50}><Glyph $serif $italic $size={40} $color="#666">fx</Glyph></Slot>
        </Field>
        <Rule $gap={2} $h={1} />
        <Field>
          <input aria-label="Formula" />
          <Slot $w={40} $h={50} aria-label="Expand formula bar">
            <svg width="26" height="16" viewBox="0 0 26 16" fill="none" stroke="#6b6b6b" strokeWidth="5"><path d="M2 2 13 12 24 2" /></svg>
          </Slot>
        </Field>
      </FormulaBar>

      <Workspace>
        <SheetView>
          <Sheet>
            <colgroup>
              <col style={{ width: 68 }} />
              {columns.map(([c, w]) => <col key={c} style={w ? { width: w } : undefined} />)}
            </colgroup>
            <thead>
              <tr>
                <ColHead aria-label="Select all">
                  <svg width="64" height="42" viewBox="0 0 64 42" fill="#b4b4b4"><path d="M24 41H63V2Z" /></svg>
                </ColHead>
                {columns.map(([c]) => <ColHead key={c} scope="col" $active={c === "D"} $end={c === "W"}>{c}</ColHead>)}
              </tr>
            </thead>
            <tbody>
              <Row $h={55}><RowHead scope="row" $top>1</RowHead><Cell colSpan={23} /></Row>
              {[["2", "บริษัท"], ["3", "เดือน"]].map(([n, t]) => (
                <Row key={n} $h={80}>
                  <RowHead scope="row">{n}</RowHead>
                  <Cell />
                  <Cell><Thai>{t}</Thai></Cell>
                  <Cell colSpan={2} $bottom="solid" />
                  <Cell colSpan={19} />
                </Row>
              ))}
              <Row $h={27}><RowHead aria-label="4" /><Cell /><Cell colSpan={17} $bottom="solid" /><Cell colSpan={5} /></Row>
              <Row $h={79}>
                <RowHead scope="row">5</RowHead>
                <Cell $right />
                <Cell rowSpan={2} $bg={sky} $right $bottom="solid"><Thai $kind="head">วันที่</Thai></Cell>
                <Cell rowSpan={2} $bg={sky} $right $bottom="solid"><Thai $kind="head">เอกสารอ้างอิง</Thai></Cell>
                <Cell rowSpan={2} $bg={sky} $right $bottom="solid"><Thai $kind="head">รายการ</Thai></Cell>
                <Cell colSpan={4} $bg={lime} $right $bottom="solid"><Thai $kind="head">รายได้</Thai></Cell>
                <Cell colSpan={5} $bg={amber} $right $bottom="solid"><Thai $kind="head">ค่าใช้จ่าย</Thai></Cell>
                <Cell colSpan={5} $bg={silver} $right $bottom="solid"><Thai $kind="head">การจ่ายเงิน</Thai></Cell>
                <Cell colSpan={5} />
              </Row>
              <Row $h={77}>
                <RowHead scope="row">6</RowHead>
                <Cell $right />
                {subHeads.map(([t, bg]) => (
                  <Cell key={t} $bg={bg} $right $bottom="solid"><Thai $kind="head">{t}</Thai></Cell>
                ))}
                <Cell colSpan={5} />
              </Row>
              {entryRows.map((n) => (
                <Row key={n} $h={80}>
                  <RowHead scope="row" $active={n === 9}>{n}</RowHead>
                  <Cell $right />
                  {letters("B", "R").map((c) => {
                    const selected = n === 9 && c === "D";
                    return (
                      <Cell key={c} $right $bottom={n === 18 && c > "D" ? "solid" : "dotted"} $selected={selected}>
                        {selected && <Selection />}
                      </Cell>
                    );
                  })}
                  <Cell />
                  <Cell $color="#0070c0">OK</Cell>
                  <Cell colSpan={3} />
                </Row>
              ))}
              <Row $h={81}>
                <RowHead scope="row">19</RowHead>
                <Cell colSpan={4} />
                {letters("E", "Q").map((c) => (
                  <Cell key={c} $align="right" $pad={16} $bottom="double"><Figure>0.00</Figure></Cell>
                ))}
                <Cell colSpan={6} />
              </Row>
              <Row $h={81}><RowHead scope="row">20</RowHead><Cell colSpan={23} /></Row>
              <Row $h={80}>
                <RowHead scope="row">21</RowHead>
                <Cell colSpan={3} />
                <Cell colSpan={2} $align="left" $pad={5}><Thai $kind="title">ภาษีมูลค่าเพิ่มประจำเดือน</Thai></Cell>
                <Cell colSpan={2} />
                <Cell colSpan={2} $align="left" $pad={5}><Thai $kind="under">งบกำไรขาดทุน</Thai></Cell>
                <Cell />
                <Cell colSpan={2} $align="right" $pad={5}><Thai $kind="under">งบต้นทุนขาย</Thai></Cell>
                <Cell colSpan={11} />
              </Row>
              <Row $h={80}>
                <RowHead scope="row">22</RowHead>
                <Cell colSpan={3} />
                <Cell $align="right" $pad={6}><Thai>ภาษีขาย</Thai></Cell>
                <Cell $align="right" $pad={16}><Figure>0.00</Figure></Cell>
                <Cell colSpan={2} />
                <Cell $align="right" $pad={6}><Thai>รายได้ขาย</Thai></Cell>
                <Cell $align="right" $pad={16}><Figure>0.00</Figure></Cell>
                <Cell />
                <Cell colSpan={2} $align="right" $pad={6}><Thai>สินค้าคงเหลือต้นงวด</Thai></Cell>
                <Cell $align="right" $pad={18} $bg="#fce4d6"><Figure>0.00</Figure></Cell>
                <Cell colSpan={10} />
              </Row>
              <Row $h={80}><RowHead aria-label="23" /><Cell colSpan={23} /></Row>
            </tbody>
          </Sheet>
        </SheetView>
        <VScroll>
          <Arrow aria-label="Scroll up"><Triangle d="up" /></Arrow>
          <VThumb />
          <VTrack />
          <Arrow aria-label="Scroll down"><Triangle d="down" /></Arrow>
        </VScroll>
      </Workspace>

      <SheetBar>
        <SheetNav>
          <button aria-label="Previous sheet"><Triangle d="left" color="#c2c2c2" size={18} /></button>
          <button aria-label="Next sheet"><Triangle d="right" color="#c2c2c2" size={18} /></button>
        </SheetNav>
        <SheetTab $w={145}>ตัวอย่าง</SheetTab>
        <SheetTab $w={182} $active>พฤษภาคม</SheetTab>
        <SheetTab $w={130}>Sheet2</SheetTab>
        <AddSheet aria-label="New sheet">
          <svg width="42" height="42" viewBox="0 0 42 42" fill="none" stroke="#777">
            <circle cx="21" cy="21" r="19" strokeWidth="2.500" />
            <path d="M21 10V32M10 21H32" strokeWidth="4" />
          </svg>
        </AddSheet>
        <Dots $before={0} $after={26}><i /><i /><i /></Dots>
        <HScroll>
          <Arrow aria-label="Scroll left"><Triangle d="left" /></Arrow>
          <HThumb />
          <HTrack />
          <Arrow aria-label="Scroll right"><Triangle d="right" /></Arrow>
        </HScroll>
      </SheetBar>

      <StatusBar>
        <ReadyText>Ready</ReadyText>
        <Views>
          <ViewButton $active aria-label="Normal view">
            <svg width="42" height="42" viewBox="0 0 42 42" fill="none" stroke="#444" strokeWidth="3">
              <path d="M2 2H40V40H2ZM2 15H40M2 27H40M15 2V40M27 2V40" />
            </svg>
          </ViewButton>
          <ViewButton aria-label="Page layout view">
            <svg width="44" height="42" viewBox="0 0 44 42" fill="none" stroke="#444" strokeWidth="3">
              <path d="M2 2H42V40H2ZM11 8H33V34H11ZM16 15H28M16 21H28M16 27H28" />
            </svg>
          </ViewButton>
          <ViewButton aria-label="Page break view">
            <svg width="44" height="42" viewBox="0 0 44 42" fill="none" stroke="#444" strokeWidth="3">
              <path d="M2 2H42V40H2ZM2 24H27V2M15 2V24" />
            </svg>
          </ViewButton>
        </Views>
        <Slot $w={28} $h={50} aria-label="Zoom out">
          <svg width="24" height="24" viewBox="0 0 24 24" stroke="#444" strokeWidth="2"><path d="M0 12H24" /></svg>
        </Slot>
        <Zoom type="range" min={0} max={100} defaultValue={50} aria-label="Zoom" />
        <Slot $w={24} $h={50} aria-label="Zoom in">
          <svg width="24" height="24" viewBox="0 0 24 24" stroke="#444" strokeWidth="2"><path d="M0 12H24M12 0V24" /></svg>
        </Slot>
        <ZoomValue>100%</ZoomValue>
      </StatusBar>
    </Page>
  );
}
